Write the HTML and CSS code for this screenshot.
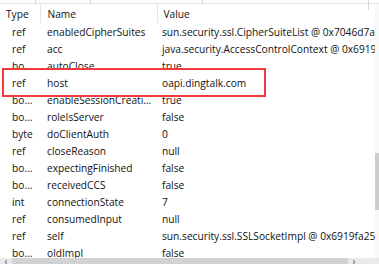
FILE: index.html
```html
<!DOCTYPE html>
<html lang="en">
<head>
  <meta charset="UTF-8">
  <title>Variables</title>
  <link rel="stylesheet" href="styles.css">
</head>
<body>
  <div class="panel">
    <div class="top-strip">
      <span class="tick t1"></span>
      <span class="tick t2"></span>
      <span class="tick t3"></span>
      <span class="tick t4"></span>
    </div>
    <div class="body-row">
      <div class="table-wrap">
        <table class="vars">
          <colgroup>
            <col class="c-type">
            <col class="c-name">
            <col class="c-value">
          </colgroup>
          <thead>
            <tr><th>Type</th><th>Name</th><th>Value</th></tr>
          </thead>
          <tbody>
            <tr><td>ref</td><td>enabledCipherSuites</td><td>sun.security.ssl.CipherSuiteList @ 0x7046d7a..</td></tr>
            <tr><td>ref</td><td>acc</td><td>java.security.AccessControlContext @ 0x6919fa2c8</td></tr>
            <tr><td>boolean</td><td>autoClose</td><td>true</td></tr>
            <tr><td>ref</td><td>host</td><td>oapi.dingtalk.com</td></tr>
            <tr><td>boolean</td><td>enableSessionCreation</td><td>true</td></tr>
            <tr><td>boolean</td><td>roleIsServer</td><td>false</td></tr>
            <tr><td>byte</td><td>doClientAuth</td><td>0</td></tr>
            <tr><td>ref</td><td>closeReason</td><td>null</td></tr>
            <tr><td>boolean</td><td>expectingFinished</td><td>false</td></tr>
            <tr><td>boolean</td><td>receivedCCS</td><td>false</td></tr>
            <tr><td>int</td><td>connectionState</td><td>7</td></tr>
            <tr><td>ref</td><td>consumedInput</td><td>null</td></tr>
            <tr><td>ref</td><td>self</td><td>sun.security.ssl.SSLSocketImpl @ 0x6919fa258</td></tr>
            <tr><td>boolean</td><td>oldImpl</td><td>false</td></tr>
          </tbody>
        </table>
        <div class="highlight"></div>
      </div>
      <div class="vscroll">
        <div class="vthumb"></div>
      </div>
    </div>
    <div class="hscroll">
      <span class="arrow">&lsaquo;</span>
      <div class="hthumb"></div>
      <span class="arrow">&rsaquo;</span>
    </div>
  </div>
</body>
</html>
```

FILE: styles.css
```css
body {
  margin: 0;
  background-color: #fff;
  font-family: 'Open Sans', 'Noto Sans', sans-serif;
  font-size: 10.2px;
  color: #111;
  overflow: hidden;
}
.panel {
  width: 379px;
  height: 264px;
  display: flex;
  flex-direction: column;
  overflow: hidden;
}
.top-strip {
  position: relative;
  height: 3px;
  border-bottom: 1px solid #e3e3e3;
  flex: none;
}
.tick {
  position: absolute;
  top: 0;
  width: 1px;
  height: 3px;
  background-color: #d6d6d6;
}
.t1 { left: 35px; }
.t2 { left: 90px; }
.t3 { left: 202px; }
.t4 { left: 368px; height: 10px; }
.body-row {
  flex: 1;
  display: flex;
  min-height: 0;
}
.table-wrap {
  position: relative;
  width: 375px;
  overflow: hidden;
}
.vars {
  border-collapse: collapse;
  table-layout: fixed;
  width: 460px;
}
.c-type { width: 40px; }
.c-name { width: 117px; }
.c-value { width: 303px; }
th {
  font-weight: normal;
  text-align: left;
  height: 19px;
  padding: 0 4px 0 6px;
  border-right: 1px solid #e5e5e5;
}
th:nth-child(2) { padding-left: 7px; }
th:nth-child(3) { padding-left: 6px; }
td {
  height: 17px;
  padding: 0 4px 0 7px;
  white-space: nowrap;
  overflow: hidden;
  text-overflow: ellipsis;
}
td:first-child {
  padding-left: 12px;
  padding-right: 3px;
}
td:nth-child(3) {
  padding-left: 5px;
  text-overflow: clip;
}
.highlight {
  position: absolute;
  left: 2px;
  top: 64px;
  width: 260px;
  height: 25px;
  border: 2px solid #f33a3a;
}
.vscroll {
  width: 4px;
  background-color: #f8f8f8;
  position: relative;
}
.vthumb {
  position: absolute;
  left: 0;
  right: 0;
  top: 149px;
  height: 57px;
  background-color: #cdcdcd;
}
.hscroll {
  flex: none;
  height: 6px;
  background-color: #eaeaea;
  display: flex;
  align-items: center;
  overflow: hidden;
}
.arrow {
  width: 12px;
  text-align: center;
  font-size: 10px;
  line-height: 6px;
  color: #555;
}
.hthumb {
  width: 336px;
  height: 6px;
  background-color: #d2d2d2;
}
```
